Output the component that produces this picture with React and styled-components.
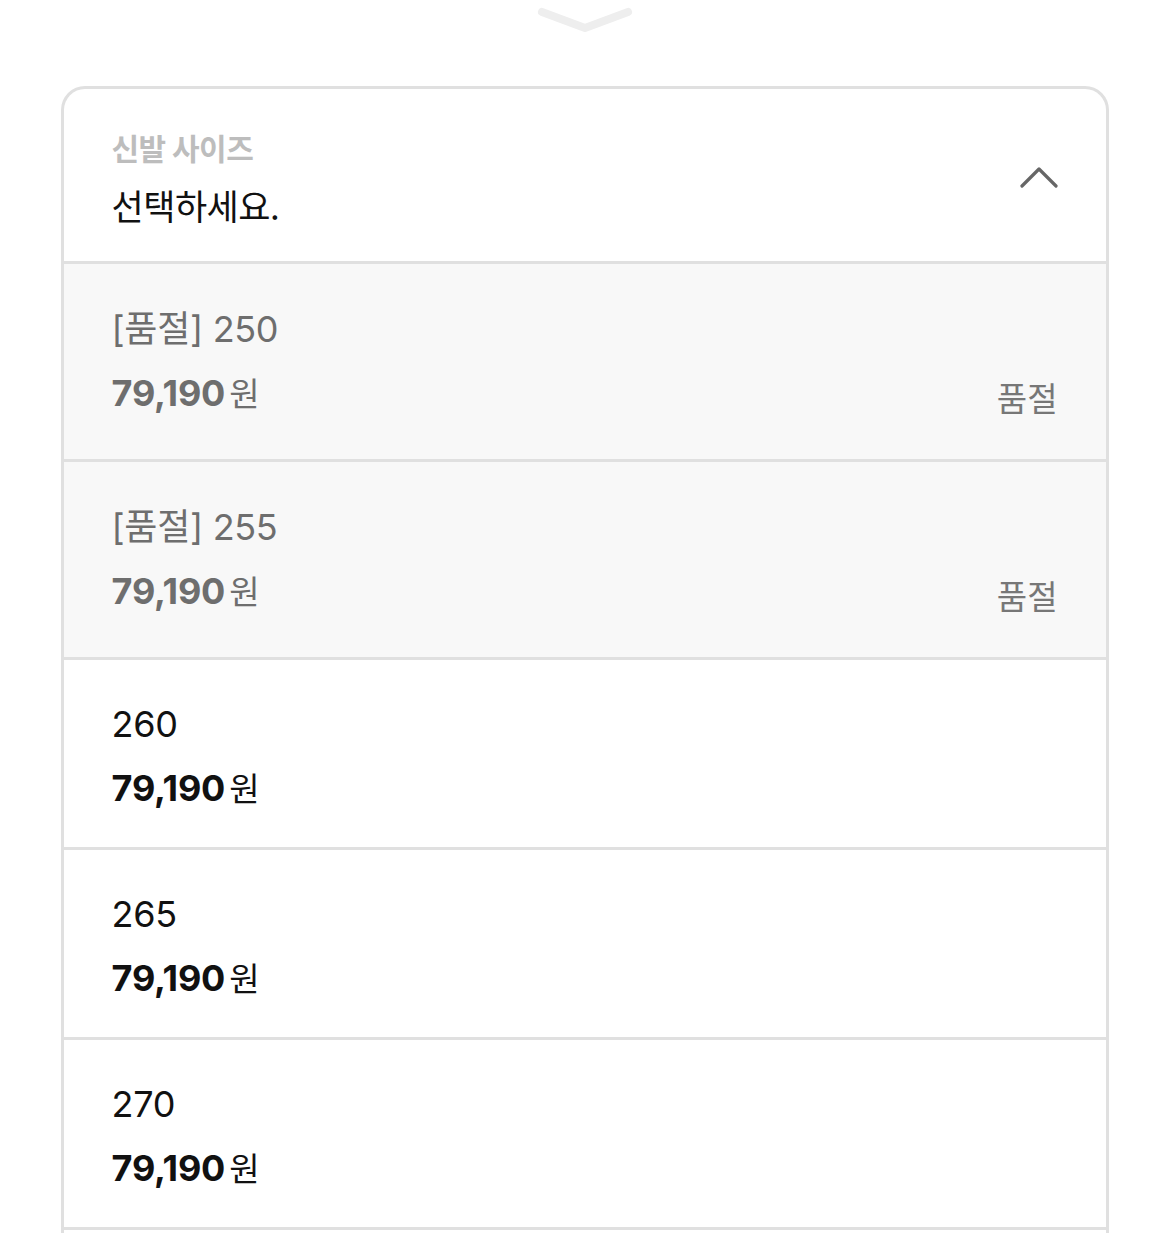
import React from "react";
import styled, { createGlobalStyle } from "styled-components";

const Global = createGlobalStyle`
  html, body { margin: 0; padding: 0; background: #fff; overflow: hidden; }
  body { font-family: Inter, "Noto Sans CJK KR", sans-serif; color: #111; }
`;

const Page = styled.div`
  width: 1169px;
  height: 1233px;
  overflow: hidden;
  display: flex;
  flex-direction: column;
  align-items: center;
`;

const Handle = styled.div`
  height: 86px;
  flex-shrink: 0;
  width: 100%;
  display: flex;
  justify-content: center;
  align-items: flex-start;
`;

const Box = styled.div`
  width: 1048px;
  box-sizing: border-box;
  border: 3px solid #e0e0e0;
  border-bottom: none;
  border-radius: 24px 24px 0 0;
  background: #fff;
  overflow: hidden;
  flex-shrink: 0;
`;

const Header = styled.div`
  display: flex;
  align-items: center;
  justify-content: space-between;
  padding: 40px 48px 34px 48px;
  border-bottom: 3px solid #e0e0e0;
`;

const HeaderText = styled.div`
  display: flex;
  flex-direction: column;
  gap: 18px;
`;

const Label = styled.div`
  font-family: "Noto Sans CJK KR", sans-serif;
  font-size: 30px;
  line-height: 36px;
  font-weight: 700;
  color: #bdbdbd;
  letter-spacing: -0.5px;
`;

const Title = styled.div`
  font-family: "Noto Sans CJK KR", sans-serif;
  font-size: 35px;
  line-height: 44px;
  color: #111;
  letter-spacing: -0.5px;
`;

const Row = styled.div`
  display: flex;
  justify-content: space-between;
  align-items: flex-end;
  padding: ${(p) => (p.$soldOut ? "43px 48px 44px" : "42px 48px 37px")};
  background: ${(p) => (p.$soldOut ? "#f8f8f8" : "#fff")};
  border-bottom: 3px solid #e0e0e0;
  color: ${(p) => (p.$soldOut ? "#6e6e6e" : "#111")};
`;

const RowText = styled.div`
  display: flex;
  flex-direction: column;
  gap: 19px;
`;

const Name = styled.div`
  font-size: 36px;
  line-height: 44px;
  letter-spacing: -0.3px;
`;

const Price = styled.div`
  font-size: 36px;
  line-height: 44px;
  font-weight: 700;
  letter-spacing: -0.2px;
  display: flex;
  align-items: baseline;
`;

const Won = styled.span`
  font-family: "Noto Sans CJK KR", sans-serif;
  font-weight: 400;
  font-size: 33px;
  margin-left: 4px;
  letter-spacing: 0;
`;

const Tag = styled.div`
  font-family: "Noto Sans CJK KR", sans-serif;
  font-size: 33px;
  line-height: 44px;
  color: #777;
  margin-bottom: -4px;
`;

const Filler = styled.div`
  height: 60px;
`;

const items = [
  { name: "[품절] 250", soldOut: true },
  { name: "[품절] 255", soldOut: true },
  { name: "260" },
  { name: "265" },
  { name: "270" },
];

export default function App() {
  return (
    <Page>
      <Global />
      <Handle>
        <svg width="100" height="40" viewBox="0 0 100 40">
          <polyline
            points="7,12 50,28 93,12"
            fill="none"
            stroke="#eeeeee"
            strokeWidth="8"
            strokeLinecap="round"
            strokeLinejoin="round"
          />
        </svg>
      </Handle>
      <Box>
        <Header>
          <HeaderText>
            <Label>신발 사이즈</Label>
            <Title>선택하세요.</Title>
          </HeaderText>
          <svg width="38" height="24" viewBox="0 0 38 24">
            <polyline
              points="2,20 19,3 36,20"
              fill="none"
              stroke="#666"
              strokeWidth="3.2"
              strokeLinecap="round"
              strokeLinejoin="round"
            />
          </svg>
        </Header>
        {items.map((it) => (
          <Row key={it.name} $soldOut={it.soldOut}>
            <RowText>
              <Name>{it.name}</Name>
              <Price>
                79,190<Won>원</Won>
              </Price>
            </RowText>
            {it.soldOut && <Tag>품절</Tag>}
          </Row>
        ))}
        <Filler />
      </Box>
    </Page>
  );
}
